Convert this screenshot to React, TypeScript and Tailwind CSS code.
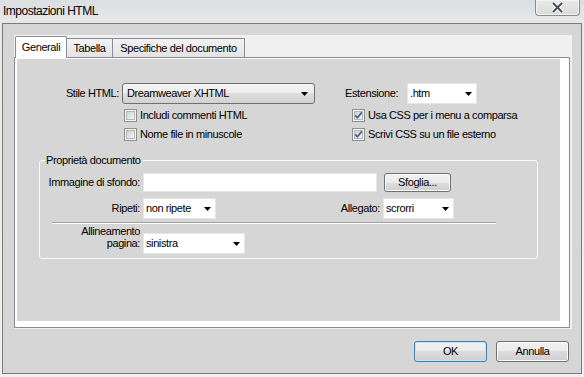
import React from 'react';

function Arrow() {
  return (
    <svg width="7" height="4" viewBox="0 0 7 4" className="shrink-0">
      <path d="M0 0h7L3.5 4z" fill="#000" />
    </svg>
  );
}

function Select({ value, className }: { value: string; className: string }) {
  return (
    <div className={`${className} h-[21px] flex items-center justify-between bg-white border border-[#e6e6e6] pl-[2px] pr-[4px]`}>
      <span>{value}</span>
      <Arrow />
    </div>
  );
}

function Check({ label, checked = false }: { label: string; checked?: boolean }) {
  return (
    <div className="h-[19px] flex items-center gap-[3px]">
      <svg width="13" height="13" viewBox="0 0 13 13" className="shrink-0">
        <defs>
          <linearGradient id="cbfill" x1="0" y1="0" x2="1" y2="1">
            <stop offset="0" stopColor="#cbcfd5" />
            <stop offset="1" stopColor="#f6f6f6" />
          </linearGradient>
        </defs>
        <rect x="0.5" y="0.5" width="12" height="12" fill="#f4f4f4" stroke="#8f8f8f" />
        <rect x="2.5" y="2.5" width="8" height="8" fill="url(#cbfill)" stroke="#b4b8bd" />
        {checked && (
          <path d="M3.2 6.4 L5.4 8.8 L9.8 3.4" fill="none" stroke="#4c5f8a" strokeWidth="1.7" />
        )}
      </svg>
      <span>{label}</span>
    </div>
  );
}

function Button({ label, className }: { label: string; className: string }) {
  return (
    <div
      className={`${className} flex items-center justify-center rounded-[3px] border bg-[linear-gradient(#f2f2f2,#ebebeb_50%,#dddddd_50%,#cfcfcf)]`}
    >
      {label}
    </div>
  );
}

function CloseButton() {
  return (
    <div className="w-[45px] h-[16px] rounded-b-[4px] border border-t-0 border-[#8c8c8c] bg-[linear-gradient(#e9e9e9,#dadada)] shadow-[inset_0_0_0_1px_#f4f4f4] flex items-center justify-center">
      <svg width="13" height="11" viewBox="0 0 13 11">
        <path d="M2 1 L11 10 M11 1 L2 10" stroke="#ffffff" strokeWidth="4" />
        <path d="M2 1 L11 10 M11 1 L2 10" stroke="#4a4f5a" strokeWidth="2" />
      </svg>
    </div>
  );
}

export default function App() {
  return (
    <div className="w-[584px] h-[377px] overflow-hidden bg-[linear-gradient(#dcdfe2,#e6e8ea_6%,#eef0f1)] font-['Liberation_Sans',Arial,sans-serif] text-[11px] tracking-[-0.4px] text-black">
      {/* title bar */}
      <div className="h-[23px] flex items-start justify-between pl-[3px] pr-[4px]">
        <span className="mt-[4px] text-[12px] leading-[15px] tracking-[-0.5px]">Impostazioni HTML</span>
        <CloseButton />
      </div>

      {/* dialog body */}
      <div className="ml-[2px] w-[580px] h-[351px] border border-[#7b7b7b] bg-[#d6d6d6] flex flex-col">
        <div className="ml-[11px] mt-[11px] w-[558px] h-[294px] bg-[#f0f0f0] flex flex-col">
          {/* tabs */}
          <div className="h-[22px] flex items-end pl-[1px]">
            <div className="relative z-10 mb-[-1px] w-[52px] h-[22px] border border-b-0 border-[#898c95] rounded-t-[2px] bg-white flex items-center justify-center pb-[1px]">
              Generali
            </div>
            <div className="w-[46px] h-[19px] border-t border-r border-[#898c95] bg-[linear-gradient(#f2f2f2,#e4e4e4)] flex items-center justify-center">
              Tabella
            </div>
            <div className="w-[132px] h-[19px] border-t border-r border-[#898c95] bg-[linear-gradient(#f2f2f2,#e4e4e4)] flex items-center justify-center">
              Specifiche del documento
            </div>
          </div>

          {/* tab panel */}
          <div className="w-[556px] h-[271px] border border-[#898c95] bg-white pl-[2px] pt-[1px]">
            <div className="w-[543px] h-[262px] bg-[#d6d6d6] flex flex-col">
              <div className="flex pt-[24px]">
                <div className="w-[328px]">
                  <div className="flex items-center h-[21px]">
                    <span className="w-[102px] text-right">Stile HTML:</span>
                    <div className="ml-[3px] w-[193px] h-[21px] flex items-center justify-between rounded-[3px] border border-[#707070] bg-[linear-gradient(#f4f4f4,#ececec_50%,#dedede_50%,#d2d2d2)] pl-[4px] pr-[6px]">
                      <span>Dreamweaver XHTML</span>
                      <Arrow />
                    </div>
                  </div>
                  <div className="mt-[2px] pl-[107px]">
                    <Check label="Includi commenti HTML" />
                    <Check label="Nome file in minuscole" />
                  </div>
                </div>
                <div>
                  <div className="flex items-center h-[21px]">
                    <span className="w-[62px]">Estensione:</span>
                    <Select value=".htm" className="w-[70px]" />
                  </div>
                  <div className="mt-[2px] pl-[7px]">
                    <Check label="Usa CSS per i menu a comparsa" checked />
                    <Check label="Scrivi CSS su un file esterno" checked />
                  </div>
                </div>
              </div>

              {/* group box */}
              <div className="relative ml-[22px] mt-[16px] w-[499px] h-[99px] border border-[#fafafa] rounded-[3px]">
                <span className="absolute left-[5px] top-[-8px] px-[1px] bg-[#d6d6d6] leading-[14px]">Proprietà documento</span>
                <div className="flex items-center pt-[12px]">
                  <span className="w-[100px] text-right">Immagine di sfondo:</span>
                  <div className="ml-[3px] w-[234px] h-[19px] bg-white border border-[#e6e6e6]" />
                  <Button label="Sfoglia..." className="ml-[7px] w-[67px] h-[19px] border-[#707070] shadow-[inset_0_0_0_1px_#fbfbfb]" />
                </div>
                <div className="flex items-center mt-[6px]">
                  <span className="w-[100px] text-right">Ripeti:</span>
                  <Select value="non ripete" className="ml-[3px] w-[73px]" />
                  <span className="w-[164px] text-right">Allegato:</span>
                  <Select value="scrorri" className="ml-[3px] w-[71px]" />
                </div>
                <div className="ml-[12px] mt-[3px] w-[444px] h-[2px] border-t border-b border-t-[#a0a0a0] border-b-white" />
                <div className="flex items-start">
                  <span className="w-[100px] text-right leading-[12px] mt-[1px]">
                    Allineamento
                    <br />
                    pagina:
                  </span>
                  <Select value="sinistra" className="ml-[3px] mt-[9px] w-[102px]" />
                </div>
              </div>
            </div>
          </div>
        </div>

        {/* buttons */}
        <div className="mt-[12px] flex justify-end gap-[9px] pr-[12px]">
          <Button label="OK" className="w-[73px] h-[21px] border-[#3c7fb1] shadow-[inset_0_0_0_1px_#c4e5f6]" />
          <Button label="Annulla" className="w-[73px] h-[21px] border-[#707070] shadow-[inset_0_0_0_1px_#fbfbfb]" />
        </div>
      </div>
    </div>
  );
}
